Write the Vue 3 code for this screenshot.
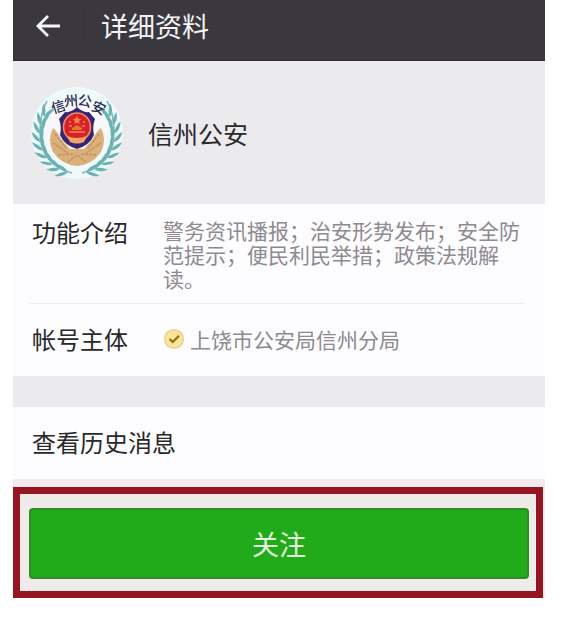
<script setup>
const toRad = (deg) => (deg * Math.PI) / 180

const leaves = []
for (let i = 0; i < 9; i++) {
  const angle = 104 + i * 13
  const x = 47 + 37 * Math.cos(toRad(angle))
  const y = 50 + 38 * Math.sin(toRad(angle))
  leaves.push({ id: `o${i}`, transform: `translate(${x} ${y}) rotate(${angle + 60})` })
  leaves.push({ id: `i${i}`, transform: `translate(${x} ${y}) rotate(${angle + 112})` })
}

const emblemText = [
  { char: '信', x: 28, y: 21, angle: -18 },
  { char: '州', x: 41, y: 15, angle: -4 },
  { char: '公', x: 55, y: 15, angle: 12 },
  { char: '安', x: 69, y: 22, angle: 24 },
]
</script>

<template>
  <main class="page">
    <header class="topbar">
      <button class="back" type="button" aria-label="返回">
        <svg width="26" height="24" viewBox="0 0 26 24" aria-hidden="true">
          <path d="M13 2 L3 12 L13 22 M3 12 H25" fill="none" stroke="#f6f6f8" stroke-width="2.8" />
        </svg>
      </button>
      <h1 class="title">详细资料</h1>
    </header>

    <section class="profile">
      <svg class="avatar" width="96" height="96" viewBox="0 0 96 96" aria-hidden="true">
        <circle cx="47" cy="48" r="46" fill="#effafb" />
        <circle cx="47" cy="44" r="32" fill="#f8f8fc" />
        <g id="branch">
          <path d="M42 88 Q10 79 10 47 Q10 28 17 16" fill="none" stroke="#7cbcba" stroke-width="1.6" />
          <path
            v-for="leaf in leaves"
            :key="leaf.id"
            :transform="leaf.transform"
            d="M0 0 Q6 -4.4 14 0 Q6 2.6 0 0Z"
            fill="#6bb2b0"
          />
        </g>
        <use href="#branch" transform="translate(94 0) scale(-1 1)" />
        <path
          d="M23 43 Q28 47 31 54 L40 64 H54 L63 54 Q66 47 71 43 Q77 55 71 67 Q62 80 47 81 Q32 80 23 67 Q17 55 23 43Z"
          fill="#dbb07a"
        />
        <path
          d="M25 49 L36 63 M23 58 L38 68 M28 70 L43 69 M69 49 L58 63 M71 58 L56 68 M66 70 L51 69 M38 77 L47 70 L56 77"
          fill="none"
          stroke="#c2935f"
          stroke-width="1.5"
          stroke-dasharray="3 1"
        />
        <path
          d="M47 22 Q53 28 59 27 L65 34 Q62 42 64 50 Q60 60 47 64 Q34 60 30 50 Q32 42 29 34 L35 27 Q41 28 47 22Z"
          fill="#39256f"
        />
        <ellipse cx="47" cy="42" rx="13.5" ry="14" fill="#d81f2c" stroke="#ee8b65" stroke-width="1.6" />
        <path d="M47 31 l1.3 2.7 3 .3 -2.3 2 .7 3 -2.7-1.6 -2.7 1.6 .7-3 -2.3-2 3-.3Z" fill="#f08c3b" />
        <path d="M40 36 v2 M54 36 v2 M39 41 h3 M52 41 h3" stroke="#ee8c3c" stroke-width="1.6" />
        <path d="M42 43 L47 40 L52 43 V45 H42Z M39 46 H55 V48 H39Z" fill="#ea7433" />
        <path d="M37 51 Q47 55 57 51 L54 57 Q47 60 40 57Z" fill="#f0a468" />
        <text
          v-for="item in emblemText"
          :key="item.char"
          class="emblem-char"
          text-anchor="middle"
          dominant-baseline="central"
          :transform="`translate(${item.x} ${item.y}) rotate(${item.angle})`"
        >{{ item.char }}</text>
      </svg>
      <h2 class="name">信州公安</h2>
    </section>

    <dl class="details">
      <div class="row intro">
        <dt>功能介绍</dt>
        <dd>警务资讯播报；治安形势发布；安全防范提示；便民利民举措；政策法规解读。</dd>
      </div>
      <div class="row owner">
        <dt>帐号主体</dt>
        <dd class="verified">
          <svg width="22" height="22" viewBox="0 0 22 22" aria-hidden="true">
            <circle cx="11" cy="11" r="9.3" fill="#fbe596" stroke="#e8d29a" stroke-width="1.6" />
            <path d="M6.5 11 L9.7 14 L16 7.8" fill="none" stroke="#97691f" stroke-width="2.2" />
          </svg>
          <span>上饶市公安局信州分局</span>
        </dd>
      </div>
    </dl>

    <a class="history" href="#history">查看历史消息</a>

    <div class="callout-area">
      <div class="callout">
        <button class="follow" type="button">关注</button>
      </div>
    </div>
  </main>
</template>

<style>
body {
  margin: 0;
  background: #fff;
}
</style>

<style scoped>
.page {
  margin: 0 40px 0 13px;
  background: #ebeaed;
  color: #29282b;
  font-family: "Noto Sans CJK SC", sans-serif;
}

.topbar {
  display: flex;
  align-items: center;
  height: 61px;
  padding: 0 22px 8px;
  box-sizing: border-box;
  background: #3a383e;
  border-bottom: 1px solid #2c2a30;
}

.back {
  display: flex;
  padding: 0;
  border: 0;
  background: none;
}

.title {
  margin: 0 0 0 22px;
  padding-left: 17px;
  border-left: 1px solid #343340;
  color: #f4f3f6;
  font-size: 27px;
  font-weight: 400;
  line-height: 32px;
}

.profile {
  display: flex;
  align-items: center;
  gap: 22px;
  height: 143px;
  padding: 0 17px;
  box-sizing: border-box;
}

.avatar {
  flex: none;
}

.emblem-char {
  fill: #262b50;
  font-size: 14px;
  font-weight: 500;
}

.name {
  margin: 0;
  font-size: 25px;
  font-weight: 400;
  line-height: 32px;
}

.details {
  margin: 0;
  padding: 0 20px 0 16px;
  background: #fdfcfe;
}

.row {
  display: grid;
  grid-template-columns: 131px 1fr;
  padding-left: 3px;
}

.intro {
  padding-top: 14px;
  padding-bottom: 13px;
  border-bottom: 1px solid #edecee;
}

.owner {
  align-items: center;
  height: 72px;
  padding-bottom: 2px;
  box-sizing: border-box;
}

dt {
  font-size: 24px;
  line-height: 28px;
}

dd {
  margin: 0;
  color: #8d8a90;
  font-size: 21px;
  line-height: 24px;
}

.verified {
  display: flex;
  align-items: center;
  gap: 5px;
}

.history {
  display: block;
  margin-top: 31px;
  padding: 19px 19px 21px;
  background: #fdfcfe;
  color: inherit;
  font-size: 24px;
  line-height: 32px;
  text-decoration: none;
}

.callout-area {
  padding: 8px 2px 0 0;
  background: #f3ebeb;
}

.callout {
  padding: 14px 7px 12px 9px;
  border: 7px solid #961522;
  background: #efebe8;
}

.follow {
  display: block;
  width: 100%;
  height: 71px;
  padding: 0;
  border: 2px solid #2d8b2a;
  border-radius: 4px;
  background: #21ab1a;
  color: #e3fbdc;
  font-family: inherit;
  font-size: 27px;
}
</style>
